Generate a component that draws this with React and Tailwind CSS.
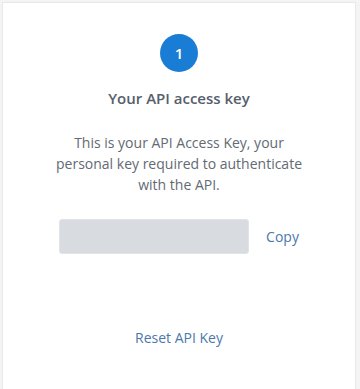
export default function App() {
  return (
    <div className="h-[389px] w-[360px] bg-[#f4f4f4] pt-[2px] pl-[2px] pr-[4px] overflow-hidden" style={{ fontFamily: '"Open Sans", sans-serif' }}>
      <div className="h-[400px] bg-white border border-[#e8e8e8] flex flex-col items-center">
        <div className="mt-[31px] w-[38px] h-[38px] rounded-full bg-[#1a7dd5] flex items-center justify-center text-white text-[15px] font-semibold">
          1
        </div>
        <h1 className="mt-[15px] text-[15px] font-semibold text-[#56606c]">Your API access key</h1>
        <p className="mt-[22px] w-[250px] text-center text-[14px] leading-[21px] text-[#636a73]">
          This is your API Access Key, your personal key required to authenticate with the API.
        </p>
        <div className="mt-[24px] flex items-center">
          <div className="w-[190px] h-[35px] rounded-[3px] bg-[#d8dbe0] border border-[#e1e3e7]" />
          <button className="ml-[17px] text-[14px] text-[#4a78ad]">Copy</button>
        </div>
        <button className="mt-[73px] text-[14px] text-[#4a78ad]">Reset API Key</button>
      </div>
    </div>
  );
}
